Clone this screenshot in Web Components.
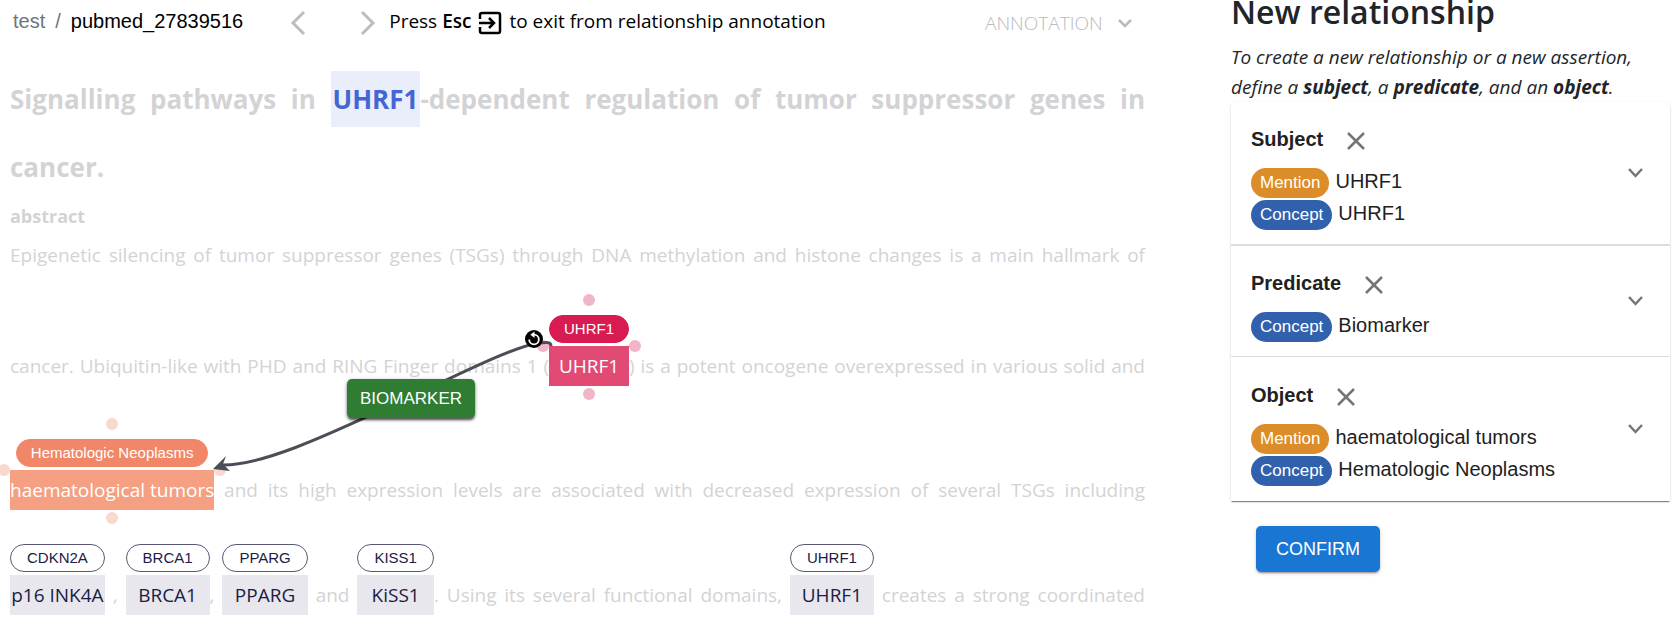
<!DOCTYPE html>
<html lang="en">
<head>
<meta charset="utf-8">
<title>pubmed_27839516</title>
<style>
body { margin: 0; background: #fff; color: #212529; font-family: "Open Sans", "Noto Sans", sans-serif; font-size: 19px; }
</style>
</head>
<body>
<annotation-app></annotation-app>
<script>
const define = (name, markup) => customElements.define(name, class extends HTMLElement {
  constructor() {
    super();
    const t = document.createElement('template');
    t.innerHTML = typeof markup === 'function' ? markup(this) : markup;
    this.attachShadow({ mode: 'open' }).append(t.content.cloneNode(true));
  }
});

/* Highlighted passage with its concept label above it */
define('concept-mention', el => `
<style>
  :host { display: inline-block; position: relative; margin-top: 21px; text-align: center; text-align-last: center; white-space: nowrap; color: #1d1b45;
    --tag-bg: #fff; --tag-line: #5a5874; --box: #e8e7ee; --dot: transparent; --tag-pad: 16px; }
  :host([kind]) { margin-top: 40px; margin-bottom: 13px; color: #fff; --tag-line: var(--tag-bg); --tag-pad: 14px; }
  :host([kind=gene]) { --tag-bg: #d81b50; --box: #e04a73; --dot: #f0b6c8; }
  :host([kind=disease]) { --tag-bg: #f18768; --box: #f5a083; --dot: #f9d8cf; }
  .tag { display: block; box-sizing: border-box; width: max-content; height: 28px; margin: 0 auto 3px; padding: 0 var(--tag-pad); border: 1px solid var(--tag-line); border-radius: 14px; background: var(--tag-bg); font: 15px/26px "Liberation Sans", sans-serif; }
  .box { display: block; background: var(--box); line-height: 40px; }
  i { display: none; position: absolute; width: 12px; height: 12px; border-radius: 50%; background: var(--dot); }
  :host([kind]) i { display: block; }
  .n { left: calc(50% - 6px); top: -21px; }
  .s { left: calc(50% - 6px); bottom: -14px; }
  .w { left: -12px; top: 25px; }
  .e { right: -12px; top: 25px; }
</style>
<i class="n"></i><i class="w"></i><i class="e"></i><i class="s"></i>
<span class="tag">${el.getAttribute('label')}</span><span class="box"><slot></slot></span>`);

/* One justified line of the document */
define('doc-line', `
<style>
  :host { display: block; line-height: 40px; text-align: justify; text-align-last: justify; white-space: nowrap; color: #d3d3d5; }
</style><slot></slot>`);

/* Curve between subject and object, with predicate button and direction toggle */
define('relation-link', `
<style>
  :host { position: absolute; left: 0; top: 0; width: 660px; height: 560px; pointer-events: none; }
  svg { position: absolute; left: 0; top: 0; }
  button { pointer-events: auto; position: absolute; border: 0; padding: 0; }
  .predicate { left: 347px; top: 379px; width: 128px; height: 39px; border-radius: 5px; background: #2e7d32; color: #fff; font: 17px "Liberation Sans", sans-serif; box-shadow: 0 3px 2px -1px #0005, 0 2px 3px #0006, 0 1px 5px #0003; }
  .swap { left: 525px; top: 330px; width: 18px; height: 18px; border-radius: 50%; background: #000; }
</style>
<svg width="660" height="560" viewBox="0 0 660 560" fill="none" aria-hidden="true">
  <path d="M551 346C551 342 547 342 539 343C514 346 452 378 408 398C350 424 268 466 222 465" stroke="#4b4e56" stroke-width="3"/>
  <path d="M213 469L226 456L223 464L230 471Z" fill="#4b4e56"/>
</svg>
<button class="predicate"><slot></slot></button>
<button class="swap" aria-label="Reverse direction"><svg width="18" height="18" viewBox="0 0 18 18" fill="none"><path d="M4.200 9.500A4.800 4.800 0 1 0 9 4.700" stroke="#fff" stroke-width="1.800"/><path d="M9.500 1.500V8L5.400 4.700Z" fill="#fff"/></svg></button>`);

define('top-bar', `
<style>
  :host { display: flex; align-items: center; height: 44px; padding: 0 13px 0 3px; color: #000; white-space: nowrap; }
  nav { font: 20px "Liberation Sans", sans-serif; display: flex; gap: 10px; padding-bottom: 2px; }
  a { color: inherit; text-decoration: none; }
  .muted { color: #6c757d; }
  .pager { display: flex; gap: 52px; margin: 2px 0 0 46px; }
  button { border: 0; background: none; padding: 0; width: 18px; height: 26px; display: block; }
  svg { display: block; }
  .hint { display: flex; align-items: center; gap: 7px; margin-left: 12px; padding-bottom: 2px; }
  .hint svg { margin-top: 3px; }
  b { font-weight: 600; }
  label { margin-left: auto; display: flex; align-items: center; gap: 15px; margin-top: 2px; color: #b8bbbe; }
  select { appearance: none; border: 0; background: none; padding: 0; margin: 0; color: inherit; font: 300 19px "Open Sans", sans-serif; }
</style>
<nav aria-label="Breadcrumb"><a href="#" class="muted">test</a><span class="muted">/</span><a href="#">pubmed_27839516</a></nav>
<div class="pager">
  <button aria-label="Previous"><svg width="18" height="26" fill="none" stroke="#bdbdbd" stroke-width="3"><path d="M15 2L4 13L15 24"/></svg></button>
  <button aria-label="Next"><svg width="18" height="26" fill="none" stroke="#bdbdbd" stroke-width="3"><path d="M3 2L14 13L3 24"/></svg></button>
</div>
<div class="hint"><span>Press <b>Esc</b></span>
  <svg width="24" height="24" fill="none" stroke="#000" stroke-width="2.500"><path d="M2 8V4Q2 2 4 2H20Q22 2 22 4V20Q22 22 20 22H4Q2 22 2 20V16M1 12H16M11 7L16 12L11 17"/></svg>
  <span>to exit from relationship annotation</span></div>
<label><select aria-label="View mode"><option>ANNOTATION</option></select>
  <svg width="14" height="10" fill="none" stroke="#b8bbbe" stroke-width="2.500"><path d="M1 2L7 8L13 2"/></svg></label>`);

define('doc-view', `
<style>
  :host { display: block; }
  h1 { margin: 21px 0 0; font-size: 26px; line-height: 68px; font-weight: 700; color: #d3d3d5; }
  h1 doc-line { line-height: 68px; }
  h1 .last { text-align-last: left; }
  mark { display: inline-block; line-height: 56px; padding: 0 2px; background: #eaeefb; color: #4466d4; }
  h2 { margin: 0 0 4px; font-size: 18px; line-height: 30px; color: #d3d3d5; }
</style>
<h1><doc-line>Signalling pathways in <mark>UHRF1</mark>-dependent regulation of tumor suppressor genes in</doc-line><doc-line class="last">cancer.</doc-line></h1>
<h2>abstract</h2>
<doc-line>Epigenetic silencing of tumor suppressor genes (TSGs) through DNA methylation and histone changes is a main hallmark of</doc-line>
<doc-line>cancer. Ubiquitin-like with PHD and RING Finger domains 1 (<concept-mention kind="gene" label="UHRF1">UHRF1</concept-mention>) is a potent oncogene overexpressed in various solid and</doc-line>
<doc-line><concept-mention kind="disease" label="Hematologic Neoplasms">haematological tumors</concept-mention> and its high expression levels are associated with decreased expression of several TSGs including</doc-line>
<doc-line><concept-mention label="CDKN2A">p16 INK4A</concept-mention> , <concept-mention label="BRCA1">BRCA1</concept-mention>, <concept-mention label="PPARG">PPARG</concept-mention> and <concept-mention label="KISS1">KiSS1</concept-mention>. Using its several functional domains, <concept-mention label="UHRF1">UHRF1</concept-mention> creates a strong coordinated</doc-line>`);

define('value-row', el => `
<style>
  :host { display: flex; align-items: center; gap: 6px; height: 32px; font-size: 20px; }
  .pill { height: 30px; border-radius: 15px; padding: 0 9px; font-size: 17px; line-height: 30px; color: #fff; background: #3160ad; }
  :host([type=Mention]) .pill { background: #dc8c28; }
  .v { padding-bottom: 4px; }
</style><span class="pill">${el.getAttribute('type')}</span><span class="v"><slot></slot></span>`);

define('relation-part', el => `
<style>
  :host { display: flex; align-items: center; padding: 20px 27px 13px 20px; font: 20px "Liberation Sans", sans-serif; border-bottom: 1px solid #dcdcde; }
  :host([strong]) { border-bottom-width: 2px; }
  :host([last]) { border-bottom: 0; padding-top: 21px; padding-bottom: 14px; }
  .body { flex: 1; }
  .head { display: flex; align-items: center; gap: 24px; height: 34px; margin-bottom: 11px; }
  h3 { margin: 0; font-size: 20px; font-weight: 700; line-height: 30px; }
  button { border: 0; background: none; padding: 0; color: #757575; }
  .head button { margin-top: 4px; }
  .toggle { margin-bottom: 8px; }
  svg { display: block; fill: none; stroke: currentColor; }
</style>
<div class="body"><div class="head"><h3>${el.getAttribute('name')}</h3><button aria-label="Clear"><svg width="18" height="18" stroke-width="2.500"><path d="M1 1L17 17M17 1L1 17"/></svg></button></div><slot></slot></div>
<button class="toggle" aria-label="Expand" aria-expanded="false"><svg width="15" height="10" stroke-width="2.500"><path d="M1 1L7.500 8L14 1"/></svg></button>`);

define('relation-panel', `
<style>
  :host { display: block; }
  h2 { margin: 0 0 18px; font-size: 32px; line-height: 24px; font-weight: 600; white-space: nowrap; }
  p { margin: 0; font-style: italic; line-height: 30px; white-space: nowrap; }
  .card { border-radius: 5px 5px 0 0; margin-bottom: 25px; box-shadow: 0 2px 1px -1px #0005, 0 1px 1px #0003, 0 1px 3px #0002; background: #fff; color: #212121; }
  .confirm { margin-left: 25px; height: 46px; padding: 0 20px; border: 0; border-radius: 5px; background: #1976d2; color: #fff; font: 18px "Liberation Sans", sans-serif; box-shadow: 0 3px 1px -2px #0003, 0 2px 2px #0002, 0 1px 5px #0002; }
</style>
<h2>New relationship</h2>
<p>To create a new relationship or a new assertion,<br>define a <b>subject</b>, a <b>predicate</b>, and an <b>object</b>.</p>
<div class="card">
  <relation-part name="Subject" strong><value-row type="Mention">UHRF1</value-row><value-row type="Concept">UHRF1</value-row></relation-part>
  <relation-part name="Predicate"><value-row type="Concept">Biomarker</value-row></relation-part>
  <relation-part name="Object" last><value-row type="Mention">haematological tumors</value-row><value-row type="Concept">Hematologic Neoplasms</value-row></relation-part>
</div>
<button class="confirm">CONFIRM</button>`);

define('annotation-app', `
<style>
  :host { display: grid; grid-template-columns: minmax(0, 1fr) 439px; gap: 86px; padding: 0 8px 0 10px; position: relative; overflow: hidden; }
  main { min-width: 0; }
</style>
<main><top-bar></top-bar><doc-view></doc-view></main>
<aside><relation-panel></relation-panel></aside>
<relation-link>BIOMARKER</relation-link>`);
</script>
</body>
</html>
